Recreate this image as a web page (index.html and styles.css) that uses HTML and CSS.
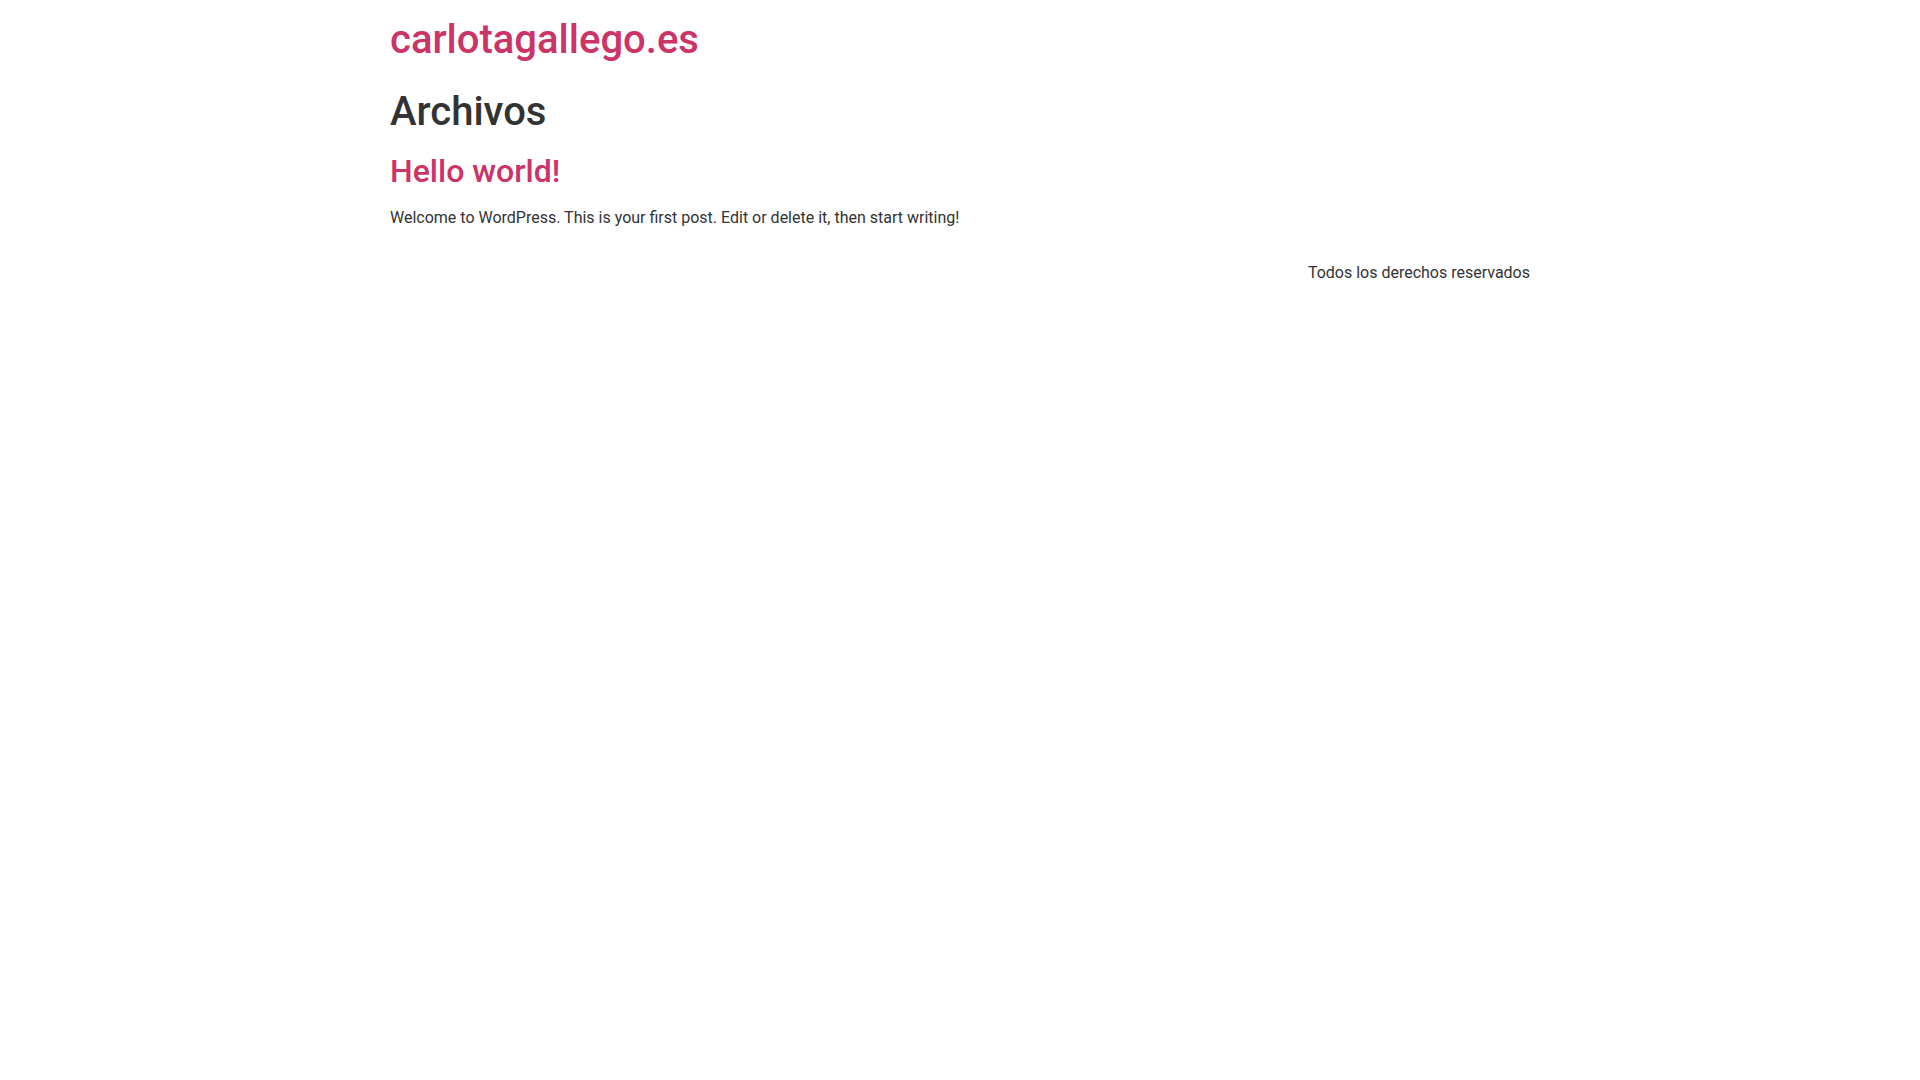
FILE: index.html
```html
<!DOCTYPE html>
<html lang="es">
<head>
<meta charset="utf-8">
<title>Archivos - carlotagallego.es</title>
<link rel="stylesheet" href="styles.css">
</head>
<body>
<header class="site-header">
  <div class="site-branding">
    <h1 class="site-title"><a href="#">carlotagallego.es</a></h1>
  </div>
</header>
<main class="site-main">
  <header class="page-header">
    <h1 class="entry-title">Archivos</h1>
  </header>
  <div class="page-content">
    <article class="post">
      <h2 class="entry-title"><a href="#">Hello world!</a></h2>
      <p>Welcome to WordPress. This is your first post. Edit or delete it, then start writing!</p>
    </article>
  </div>
</main>
<footer class="site-footer">
  <div class="footer-inner">
    <div class="copyright"><p>Todos los derechos reservados</p></div>
  </div>
</footer>
</body>
</html>
```
FILE: styles.css
```css
html { font-size: 16px; }
body {
  margin: 0;
  font-family: Roboto, "Liberation Sans", Arial, sans-serif;
  font-size: 1rem;
  font-weight: 400;
  line-height: 1.5;
  color: #333;
  background-color: #fff;
}
h1, h2 {
  margin-top: .5rem;
  margin-bottom: 1rem;
  font-weight: 500;
  line-height: 1.2;
  color: inherit;
}
h1 { font-size: 2.5rem; }
h2 { font-size: 2rem; }
p { margin-top: 0; margin-bottom: .9rem; }
a { color: #c36; text-decoration: none; }

.site-header,
.site-main,
.site-footer {
  max-width: 1140px;
  margin-left: auto;
  margin-right: auto;
}
.site-header {
  display: flex;
  justify-content: space-between;
  padding: 1rem 0;
}
.site-title { margin: 0; }

.page-header .entry-title { margin-top: .5rem; }

.site-footer {
  padding: 1rem 0;
}
.footer-inner {
  display: flex;
  justify-content: flex-end;
}
.copyright p { margin: 0; }
```
